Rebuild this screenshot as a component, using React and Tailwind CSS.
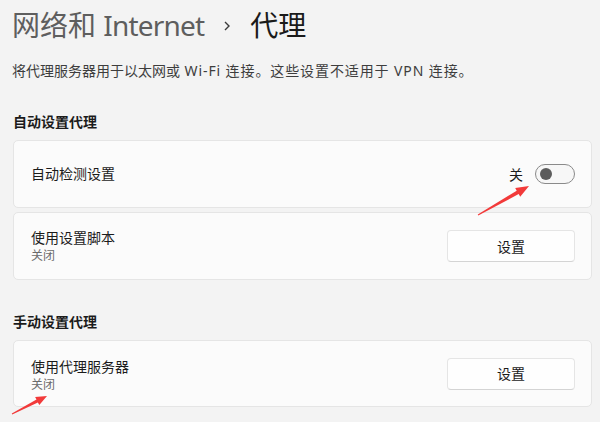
import React from "react";

const font = {
  fontFamily: '"Segoe UI", "Noto Sans", "Noto Sans CJK SC", sans-serif',
};

const Card = ({ children, className = "" }) => (
  <div
    className={`ml-[13px] mr-[8px] flex items-center justify-between rounded-[5px] border border-[#e5e5e5] bg-[#fbfbfb] pl-[17px] pr-[16px] ${className}`}
  >
    {children}
  </div>
);

const SetButton = () => (
  <button className="flex h-[32px] w-[128px] items-center justify-center rounded-[4px] border border-[#e5e5e5] border-b-[#d4d4d4] bg-[#fefefe] text-[14px] text-[#1b1b1b]">
    设置
  </button>
);

const App = () => {
  return (
    <div
      className="relative h-[422px] w-[600px] overflow-hidden bg-[#f3f3f3] text-[#1b1b1b]"
      style={font}
    >
      {/* Breadcrumb title */}
      <div className="box-content flex h-[36px] items-center pl-[12px] pt-[7px] text-[28px] leading-[36px]">
        <span className="text-[#5e5e5e]">
          网络和 <span className="tracking-[-0.8px]">Internet</span>
        </span>
        <svg className="mx-[19px] mt-[2px]" width="8" height="10" viewBox="0 0 8 10">
          <path d="M2 1 L6 5 L2 9" fill="none" stroke="#3a3a3a" strokeWidth="1.4" />
        </svg>
        <span className="text-[#1a1a1a]">代理</span>
      </div>

      <p className="mt-[18px] pl-[12px] text-[14px] leading-[20px] text-[#3d3d3d]">
        将代理服务器用于以太网或
        <span className="tracking-[0.9px]"> Wi-Fi 连接。这些设置不适用于 VPN 连接。</span>
      </p>

      <h2 className="mt-[31px] pl-[13px] text-[14px] font-semibold leading-[20px]">
        自动设置代理
      </h2>

      <Card className="mt-[8px] h-[68px]">
        <span className="text-[14px] leading-[20px]">自动检测设置</span>
        <div className="flex items-center gap-[12px]">
          <span className="text-[14px]">关</span>
          <div className="flex h-[20px] w-[40px] items-center rounded-full border border-[#8a8a8a] bg-[#f7f7f7] pl-[4px]">
            <div className="h-[12px] w-[12px] rounded-full bg-[#5c5c5c]" />
          </div>
        </div>
      </Card>

      <Card className="mt-[4px] h-[68px]">
        <div className="flex flex-col">
          <span className="text-[14px] leading-[20px]">使用设置脚本</span>
          <span className="text-[12px] leading-[16px] text-[#6b6b6b]">关闭</span>
        </div>
        <SetButton />
      </Card>

      <h2 className="mt-[32px] pl-[13px] text-[14px] font-semibold leading-[20px]">
        手动设置代理
      </h2>

      <Card className="mt-[8px] h-[67px]">
        <div className="flex flex-col pt-[2px]">
          <span className="text-[14px] leading-[20px]">使用代理服务器</span>
          <span className="text-[12px] leading-[16px] text-[#6b6b6b]">关闭</span>
        </div>
        <SetButton />
      </Card>

      {/* Red annotation arrows */}
      <svg
        className="pointer-events-none absolute left-0 top-0"
        width="600"
        height="422"
        viewBox="0 0 600 422"
      >
        <polygon
          fill="#f23a3a"
          points="477.75,214.57 516.7,190.7 515.2,188.1 529,186 520.2,196.8 518.7,194.1 478.25,215.43"
        />
        <polygon
          fill="#f23a3a"
          points="11.8,413.6 36.5,399.6 35.1,397.0 47,396 39.3,405.0 37.9,402.4 12.2,414.4"
        />
      </svg>
    </div>
  );
};

export default App;
